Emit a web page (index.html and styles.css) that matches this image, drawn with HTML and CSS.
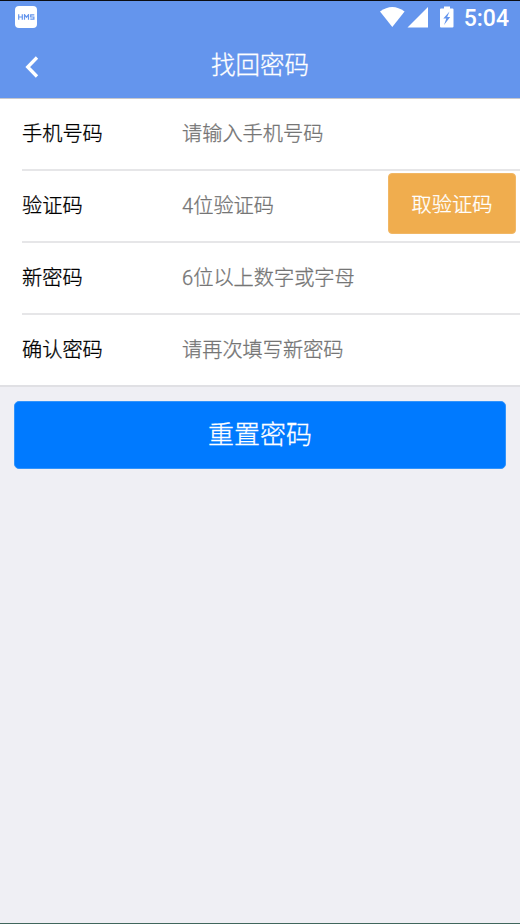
FILE: index.html
```html
<!DOCTYPE html>
<html lang="zh-CN">
<head>
<meta charset="utf-8">
<title>找回密码</title>
<link rel="stylesheet" href="styles.css">
</head>
<body>
<div class="app">
  <div class="status">
    <span class="hms"><svg width="17" height="6" viewBox="0 0 17 6" fill="none" stroke="#6495ed" stroke-width="1.200"><path d="M.7 .3V5.700M4.300 .3V5.700M.7 3H4.300M6.500 5.700V.7L8.500 3.200L10.500 .7V5.700M16.300 .9H12.700V3H15.900V5.100H12.300"/></svg></span>
    <svg class="signals" width="75" height="22" viewBox="0 0 75 22" fill="#fff">
      <path d="M0 5.500Q12.300 -3.500 24.600 5.500L12.300 21Z"/>
      <path d="M48 1V21.500H27.500Z"/>
      <path fill-rule="evenodd" d="M64 .5h6v2h2.500q1 0 1 1v17q0 1-1 1h-11.500q-1 0-1-1v-17q0-1 1-1H64zM69.500 5.500L63.300 12.500h3l-2.300 6.500 6.200-8h-3z"/>
    </svg>
    <span class="clock">5:04</span>
  </div>
  <header class="bar">
    <svg class="back" width="14" height="22" viewBox="0 0 14 22"><path d="M12 1.500L2.700 11L12 20.500" fill="none" stroke="#fff" stroke-width="3.300"/></svg>
    <h1>找回密码</h1>
  </header>
  <form class="form">
    <label class="row"><span>手机号码</span><em>请输入手机号码</em></label>
    <div class="row"><span>验证码</span><em>4位验证码</em><button type="button" class="code">取验证码</button></div>
    <label class="row"><span>新密码</span><em>6位以上数字或字母</em></label>
    <label class="row"><span>确认密码</span><em>请再次填写新密码</em></label>
  </form>
  <button class="reset">重置密码</button>
</div>
</body>
</html>
```
FILE: styles.css
```css
* { box-sizing: border-box; }
body { margin: 0; font-family: Roboto, "Noto Sans CJK SC", sans-serif; font-weight: 300; -webkit-text-stroke-width: .3px; }
.app { height: 924px; background: #efeff4; border-top: 1px solid #0b0d12; border-bottom: 1px solid #40665c; }
.status { height: 34px; background: #6495ed; display: flex; align-items: flex-start; padding: 5px 11px 0 15px; }
.hms { width: 22px; height: 22px; border-radius: 4px; background: #fff; display: flex; align-items: center; justify-content: center; }
.signals { margin-left: auto; margin-right: 9px; }
.clock { color: #fff; font-size: 23px; line-height: 26px; font-weight: 500; -webkit-text-stroke-width: 0; }
.bar { height: 63px; background: #6495ed; display: flex; align-items: center; padding: 0 25px; }
h1 { flex: 1; margin: 0 14px 0 0; padding-bottom: 6px; text-align: center; color: #fff; font-size: 24.500px; font-weight: 300; }
.form { height: 289px; background: #fff; border-top: 1px solid #c8c8cc; border-bottom: 2px solid #e0e0e4; }
.row { height: 72px; margin-left: 22px; padding-bottom: 4px; display: flex; align-items: center; border-bottom: 2px solid #e6e6e8; font-size: 20.200px; }
.row:last-child { border: 0; height: 70px; padding-bottom: 4px; }
.row span { width: 160px; color: #000; }
.row em { font-style: normal; color: #757575; }
button { border: 0; font-family: inherit; font-weight: 300; color: #fff; padding: 0; -webkit-text-stroke-width: .3px; }
.code { flex: none; align-self: flex-start; margin: 2px 4px 0 auto; width: 128px; height: 61px; background: #f0ad4e; border: 1px solid #f1b765; border-radius: 4px; font-size: 20.200px; padding-bottom: 1px; }
.reset { display: block; width: 492px; height: 68px; margin: 14px 14px; padding-bottom: 5px; background: #007aff; border: 1px solid #3294fb; border-radius: 5px; font-size: 26px; }
```
